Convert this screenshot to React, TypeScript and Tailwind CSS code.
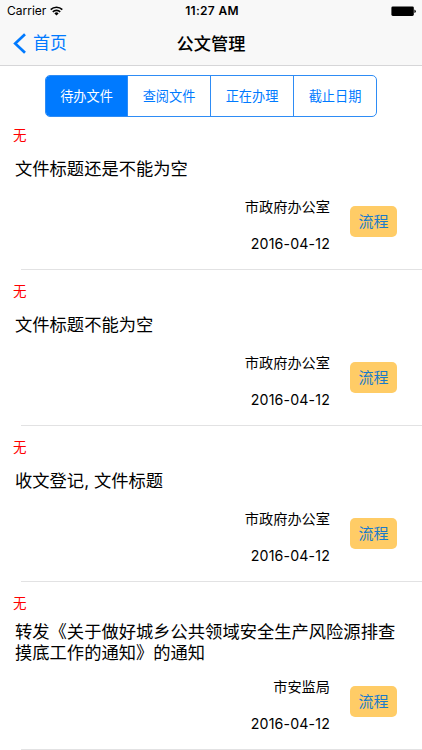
type Doc = { title: string[]; office: string };

const tabs = ['待办文件', '查阅文件', '正在办理', '截止日期'];

const docs: Doc[] = [
  { title: ['文件标题还是不能为空'], office: '市政府办公室' },
  { title: ['文件标题不能为空'], office: '市政府办公室' },
  { title: ['收文登记, 文件标题'], office: '市政府办公室' },
  { title: ['转发《关于做好城乡公共领域安全生产风险源排查', '摸底工作的通知》的通知'], office: '市安监局' },
];

function StatusBar() {
  return (
    <div className="grid h-[22px] grid-cols-3 items-center text-[12px] leading-[22px]">
      <div className="flex items-center gap-[4px] pl-[7px]">
        <span>Carrier</span>
        <svg width="13" height="10" viewBox="0 0 13 10" fill="none" stroke="#000" strokeWidth="1.6">
          <path d="M0.7 3.6a8.2 8.2 0 0 1 11.6 0" />
          <path d="M2.8 5.9a5.2 5.2 0 0 1 7.4 0" />
          <path d="M4.4 7.4a3 3 0 0 1 4.2 0L6.5 9.6z" fill="#000" stroke="none" />
        </svg>
      </div>
      <div className="pl-[2px] text-center font-semibold tracking-[0.3px]">11:27 AM</div>
      <div className="flex justify-end pr-[6px]">
        <svg width="25" height="11" viewBox="0 0 25 11">
          <rect x="0.4" y="0.4" width="22.4" height="9.6" rx="1.4" fill="#000" />
          <path d="M23.4 3.4v3.6q1.4-.4 1.4-1.8T23.4 3.4z" fill="#000" />
        </svg>
      </div>
    </div>
  );
}

function DocRow({ doc }: { doc: Doc }) {
  const long = doc.title.length > 1;
  return (
    <li className={long ? 'flex h-[168px] flex-col' : 'flex h-[156px] flex-col'}>
      <div className="mt-[11px] h-[20px] pl-[13px] text-[13.5px] leading-[20px] text-[#ff0000]">无</div>
      <div className={long ? 'mt-[8px] pl-[15px] text-[17.3px] leading-[21px]' : 'mt-[13px] pl-[15px] text-[17.3px] leading-[21px]'}>
        {doc.title.map((line) => (
          <div key={line} className="whitespace-nowrap">{line}</div>
        ))}
      </div>
      <div className="mt-auto flex items-start justify-end pr-[25px]">
        <div className="mr-[20px] text-right text-[14.2px] leading-[20px]">
          <div>{doc.office}</div>
          <div className="mt-[17px] mb-[15px] tracking-[0.15px]">2016-04-12</div>
        </div>
        <button className="mt-[9px] h-[31px] w-[47px] rounded-[5px] bg-[#ffcc66] text-[15px] leading-[31px] text-[#1a7bcb]">流程</button>
      </div>
      <div className="ml-[21px] h-px bg-[#e2e2e3]" />
    </li>
  );
}

export default function App() {
  return (
    <div className="flex h-[750px] w-[422px] flex-col overflow-hidden bg-white font-[Inter,'Noto_Sans_CJK_SC',sans-serif] text-black">
      <header className="h-[66px] shrink-0 border-b border-[#d6d6d8] bg-[#f8f8f8]">
        <StatusBar />
        <div className="grid h-[43px] grid-cols-3 items-center">
          <div className="flex items-center gap-[7px] pl-[13px] text-[17px] text-[#007aff]">
            <svg width="13" height="21" viewBox="0 0 13 21" fill="none" stroke="#007aff" strokeWidth="2.7">
              <path d="M12 1.2 2.2 10.5l9.8 9.3" />
            </svg>
            <span>首页</span>
          </div>
          <h1 className="text-center text-[17.2px] font-medium">公文管理</h1>
        </div>
      </header>
      <nav className="ml-[45px] mt-[9px] grid h-[42px] w-[332px] shrink-0 grid-cols-[81px_83px_83px_83px] overflow-hidden rounded-[5px] border border-[#2e8cf5]">
        {tabs.map((tab, i) => (
          <button
            key={tab}
            className={
              i === 0
                ? 'bg-[#007aff] pt-[2px] text-[13.2px] text-white'
                : 'border-l border-[#2e8cf5] pt-[2px] text-[13.2px] text-[#007aff]'
            }
          >
            {tab}
          </button>
        ))}
      </nav>
      <ul className="-mt-[3px] shrink-0">
        {docs.map((doc) => (
          <DocRow key={doc.title[0]} doc={doc} />
        ))}
      </ul>
    </div>
  );
}
